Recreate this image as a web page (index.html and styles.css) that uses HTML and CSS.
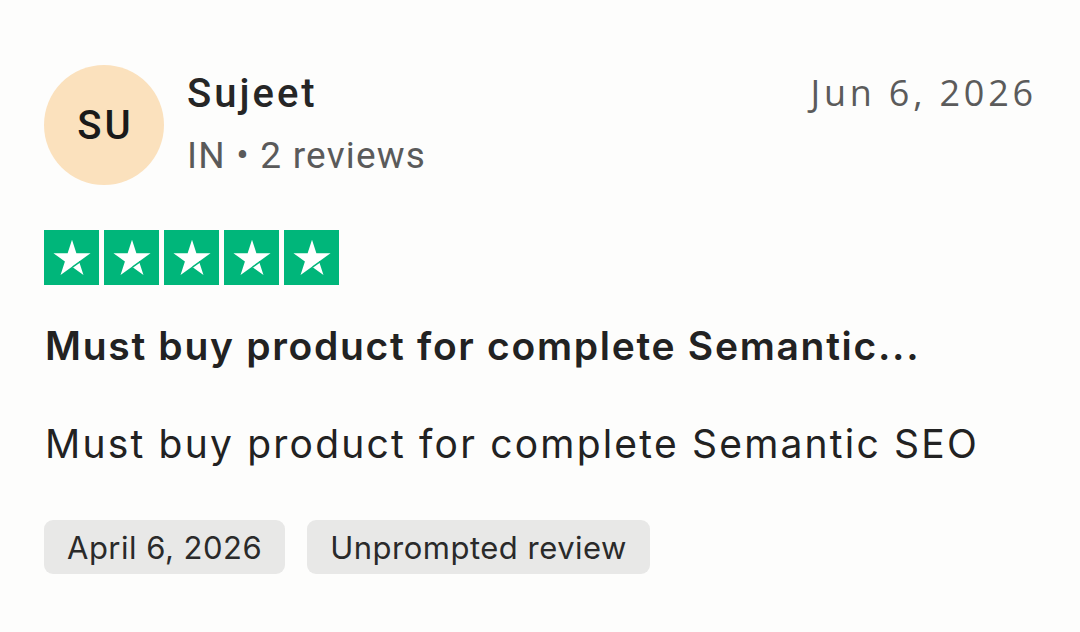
FILE: index.html
```html
<!DOCTYPE html>
<html>
<head>
<meta charset="utf-8">
<link rel="stylesheet" href="styles.css">
</head>
<body>
<div class="card">
  <div class="header">
    <div class="avatar">SU</div>
    <div class="who">
      <div class="name">Sujeet</div>
      <div class="meta">IN • 2 reviews</div>
    </div>
    <div class="date">Jun 6, 2026</div>
  </div>
  <div class="stars">
    <span class="star"><svg viewBox="0 0 24 24"><path d="M12 3.2l2.1 6.5h6.8l-5.5 4 2.1 6.5L12 16.2l-5.5 4 2.1-6.5-5.5-4h6.8z" fill="#fff"/><path d="M12.2 16.4l3.7-2.7" stroke="#00b67a" stroke-width="0.7"/></svg></span>
    <span class="star"><svg viewBox="0 0 24 24"><path d="M12 3.2l2.1 6.5h6.8l-5.5 4 2.1 6.5L12 16.2l-5.5 4 2.1-6.5-5.5-4h6.8z" fill="#fff"/><path d="M12.2 16.4l3.7-2.7" stroke="#00b67a" stroke-width="0.7"/></svg></span>
    <span class="star"><svg viewBox="0 0 24 24"><path d="M12 3.2l2.1 6.5h6.8l-5.5 4 2.1 6.5L12 16.2l-5.5 4 2.1-6.5-5.5-4h6.8z" fill="#fff"/><path d="M12.2 16.4l3.7-2.7" stroke="#00b67a" stroke-width="0.7"/></svg></span>
    <span class="star"><svg viewBox="0 0 24 24"><path d="M12 3.2l2.1 6.5h6.8l-5.5 4 2.1 6.5L12 16.2l-5.5 4 2.1-6.5-5.5-4h6.8z" fill="#fff"/><path d="M12.2 16.4l3.7-2.7" stroke="#00b67a" stroke-width="0.7"/></svg></span>
    <span class="star"><svg viewBox="0 0 24 24"><path d="M12 3.2l2.1 6.5h6.8l-5.5 4 2.1 6.5L12 16.2l-5.5 4 2.1-6.5-5.5-4h6.8z" fill="#fff"/><path d="M12.2 16.4l3.7-2.7" stroke="#00b67a" stroke-width="0.7"/></svg></span>
  </div>
  <h2 class="title">Must buy product for complete Semantic...</h2>
  <p class="body">Must buy product for complete Semantic SEO</p>
  <div class="chips">
    <span class="chip">April 6, 2026</span>
    <span class="chip">Unprompted review</span>
  </div>
</div>
</body>
</html>
```
FILE: styles.css
```css
html, body {
  margin: 0;
  padding: 0;
  background: #fdfdfc;
}
body {
  width: 1080px;
  height: 632px;
  overflow: hidden;
  font-family: Inter, "Liberation Sans", sans-serif;
  color: #1f1f1f;
}
.card {
  padding: 65px 46px 0 44px;
}
.header {
  display: flex;
  align-items: flex-start;
}
.avatar {
  width: 120px;
  height: 120px;
  border-radius: 50%;
  background: #fbe1bd;
  display: flex;
  align-items: center;
  justify-content: center;
  font-family: Roboto, "Liberation Sans", sans-serif;
  font-size: 40px;
  font-weight: 500;
  letter-spacing: 3px;
  padding-left: 3px;
  box-sizing: border-box;
  color: #1a1a1a;
  flex: none;
}
.who {
  margin-left: 23px;
  flex: 1;
  font-family: Roboto, "Liberation Sans", sans-serif;
}
.name {
  font-size: 40px;
  font-weight: 500;
  color: #262626;
  line-height: 56px;
  margin-top: 1px;
  letter-spacing: 3px;
}
.meta {
  font-size: 37px;
  color: #5a5a5a;
  line-height: 50px;
  margin-top: 9px;
  letter-spacing: 1.2px;
}
.date {
  font-family: "Open Sans", sans-serif;
  font-size: 36px;
  color: #5b5b5b;
  letter-spacing: 3.8px;
  line-height: 56px;
  margin-right: -3px;
}
.stars {
  display: flex;
  gap: 5px;
  margin-top: 45px;
}
.star {
  width: 55px;
  height: 55px;
  background: #00b67a;
  display: flex;
  align-items: center;
  justify-content: center;
}
.star svg {
  width: 50px;
  height: 50px;
  flex: none;
}
.title {
  margin: 36px 0 0 1px;
  font-size: 39px;
  font-weight: 600;
  line-height: 50px;
  color: #222;
  letter-spacing: 1.7px;
}
.body {
  margin: 48px 0 0 1px;
  font-size: 39px;
  font-weight: 400;
  line-height: 50px;
  color: #222;
  letter-spacing: 2.2px;
}
.chips {
  display: flex;
  gap: 22px;
  margin-top: 51px;
}
.chip {
  background: #e8e8e7;
  border-radius: 9px;
  height: 54px;
  padding: 0 23px;
  display: flex;
  align-items: center;
  font-size: 31px;
  color: #2a2a2a;
  letter-spacing: 0.5px;
}
```
